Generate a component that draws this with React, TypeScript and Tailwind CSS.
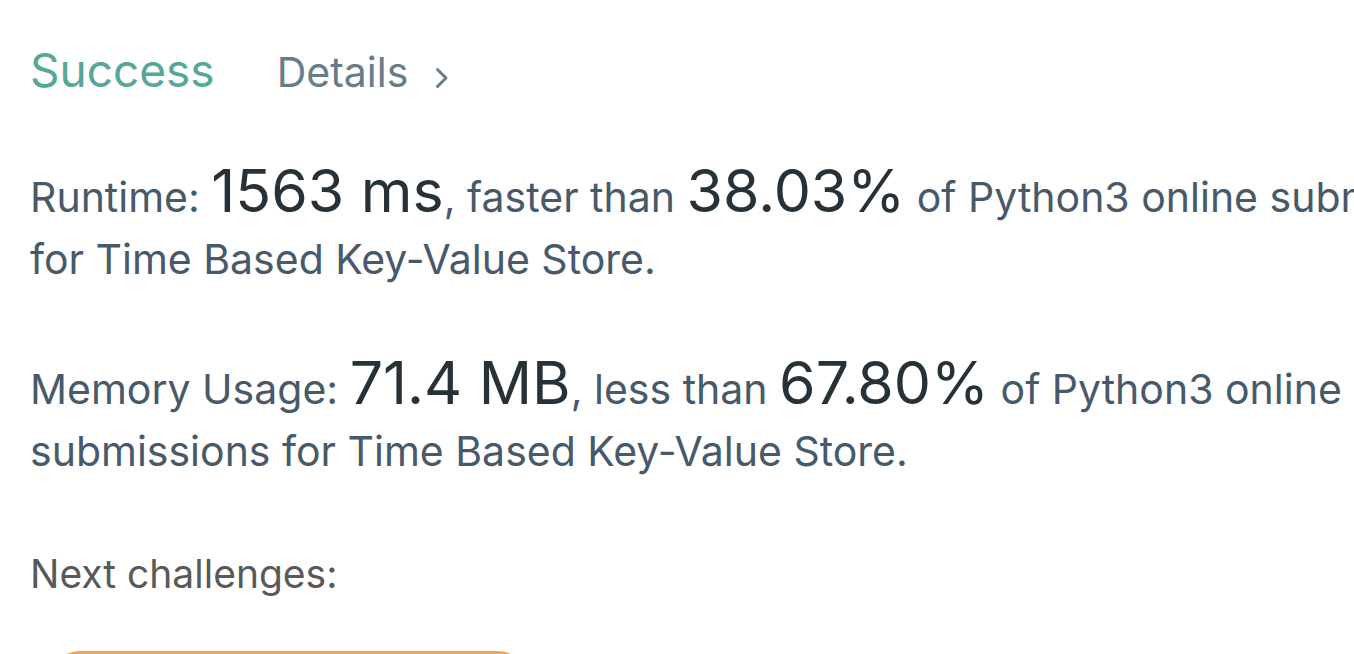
import React from "react";

export default function App() {
  return (
    <div className="w-[1354px] h-[654px] overflow-hidden bg-white" style={{ fontFamily: "Inter, 'Noto Sans', sans-serif" }}>
      <div className="w-[1600px] pl-[30px]">
        <div className="flex items-baseline h-[110px] pt-[40px]">
          <span className="text-[46px] leading-[60px] text-[#55a897]">Success</span>
          <span className="ml-[62px] text-[41px] leading-[60px] text-[#687c89]">Details</span>
          <svg className="ml-[27px] self-center mt-[6px]" width="14" height="22" viewBox="0 0 14 22" fill="none">
            <path d="M2.5 2.5 L11 11 L2.5 19.5" stroke="#687c89" strokeWidth="3" strokeLinecap="round" strokeLinejoin="round" />
          </svg>
        </div>
        <p className="mt-[50px] text-[41px] leading-[62px] text-[#48596a] w-[1500px]">
          Runtime: <span className="text-[59px] leading-[62px] text-[#263238]">1563 ms</span>, faster than{" "}
          <span className="text-[59px] leading-[62px] text-[#263238]">38.03%</span> of Python3 online submissions for Time Based Key-Value Store.
        </p>
        <p className="mt-[62px] text-[41px] leading-[62px] text-[#48596a] w-[1500px]">
          Memory Usage: <span className="text-[59px] leading-[62px] text-[#263238]">71.4 MB</span>, less than{" "}
          <span className="text-[59px] leading-[62px] text-[#263238]">67.80%</span> of Python3 online submissions for Time Based Key-Value Store.
        </p>
        <p className="mt-[61px] text-[39px] leading-[62px] text-[#595959]">Next challenges:</p>
        <div className="mt-[46px] w-[478px] h-[60px] rounded-[30px] bg-[#f0a84a] ml-[20px]" />
      </div>
    </div>
  );
}
